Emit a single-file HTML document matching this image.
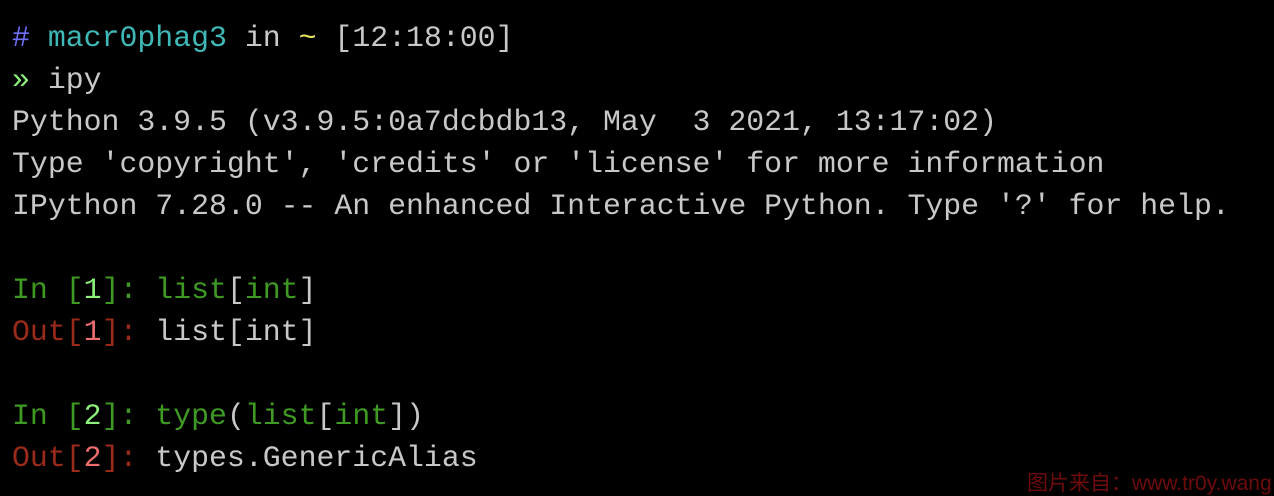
<!DOCTYPE html>
<html><head><meta charset="utf-8"><style>
html,body{margin:0;padding:0;background:#000;width:1274px;height:496px;overflow:hidden}
pre{margin:0;padding:17px 0 0 12px;font-family:"Liberation Mono","DejaVu Sans Mono",monospace;font-size:29.85px;line-height:42px;color:#c8c8c8;white-space:pre}
.b{color:#6f6ff5}.c{color:#3fb8b8}.y{color:#e6e65a}.g{color:#3e9a22}.lg{color:#8cf07a}.r{color:#9a2a1a}.lr{color:#ee6d6d}
.wm{position:absolute;left:1027px;top:472px;font-family:"Liberation Sans","Noto Sans CJK SC",sans-serif;font-size:21px;line-height:24px;color:#6e0c0c}
</style></head><body>
<pre><span class="b">#</span> <span class="c">macr0phag3</span> in <span class="y">~</span> [12:18:00]
<span class="lg">»</span> ipy
Python 3.9.5 (v3.9.5:0a7dcbdb13, May  3 2021, 13:17:02)
Type 'copyright', 'credits' or 'license' for more information
IPython 7.28.0 -- An enhanced Interactive Python. Type '?' for help.

<span class="g">In [</span><span class="lg">1</span><span class="g">]: list</span>[<span class="g">int</span>]
<span class="r">Out[</span><span class="lr">1</span><span class="r">]: </span>list[int]

<span class="g">In [</span><span class="lg">2</span><span class="g">]: type</span>(<span class="g">list</span>[<span class="g">int</span>])
<span class="r">Out[</span><span class="lr">2</span><span class="r">]: </span>types.GenericAlias</pre>
<div class="wm">图片来自：www.tr0y.wang</div>
</body></html>
